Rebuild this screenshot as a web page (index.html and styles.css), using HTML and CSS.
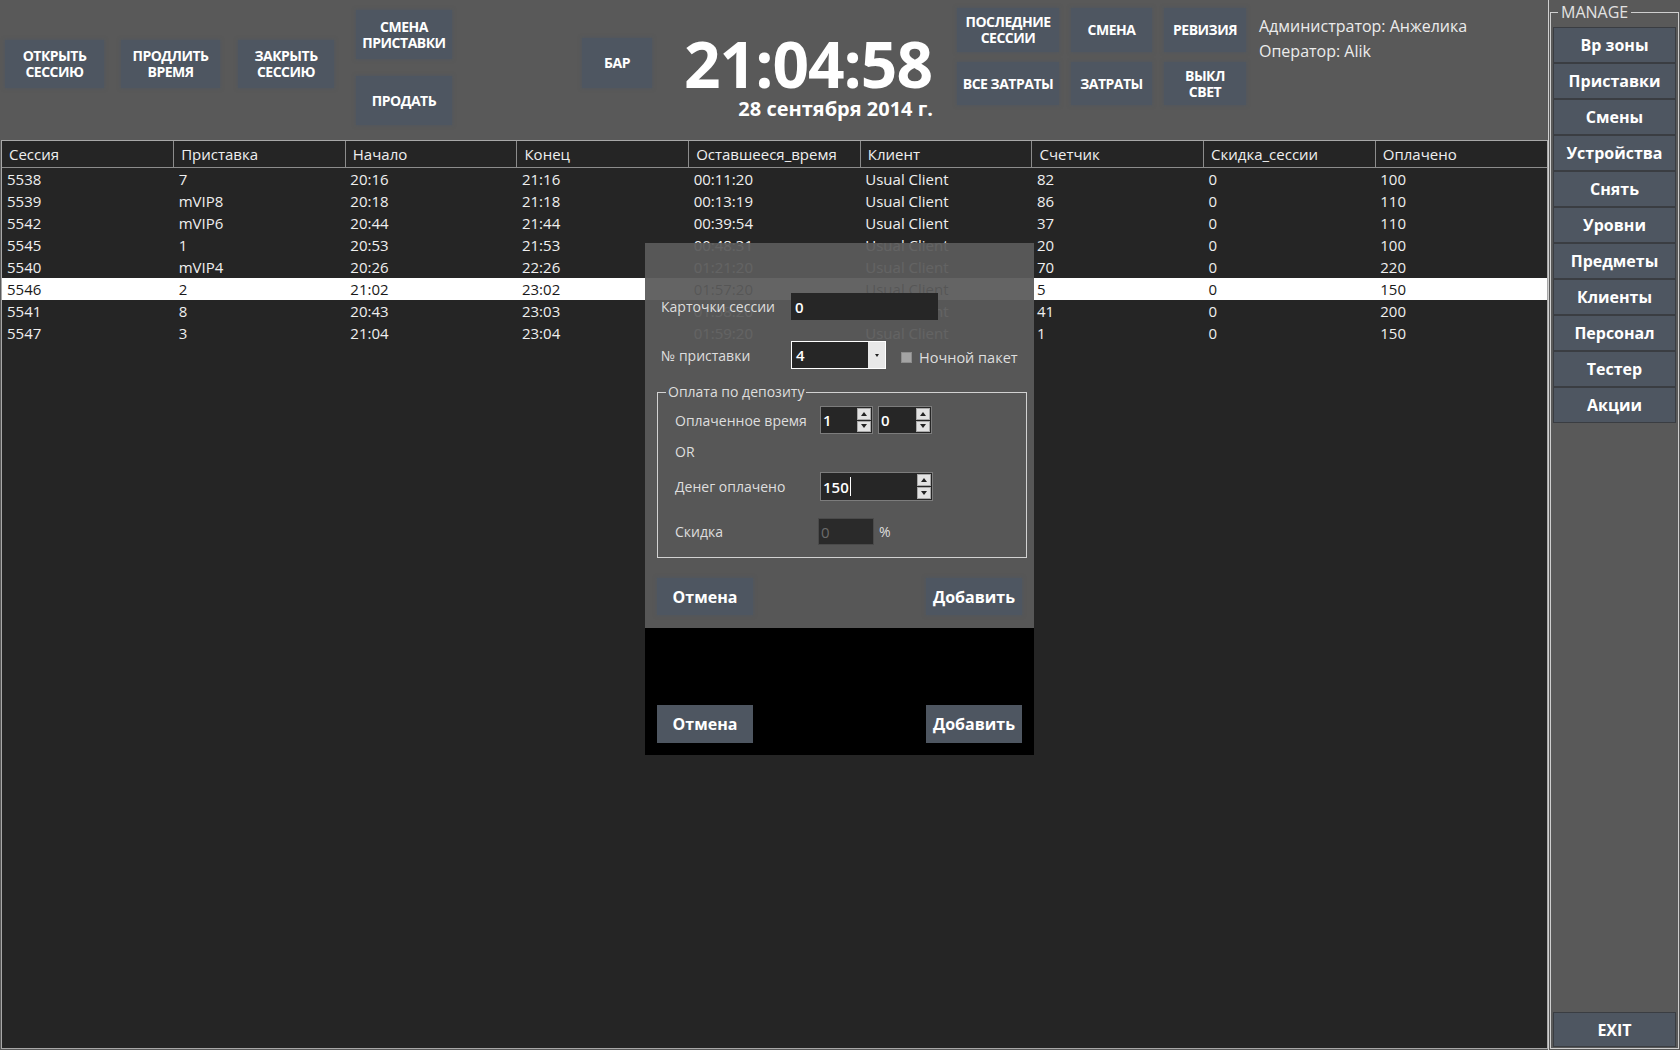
FILE: index.html
```html
<!DOCTYPE html>
<html lang="ru">
<head>
<meta charset="utf-8">
<title>Sessions</title>
<link rel="stylesheet" href="styles.css">
</head>
<body>
<div class="app">
  <div class="main">
    <header class="topbar">
      <div class="tbtn b-open">ОТКРЫТЬ<br>СЕССИЮ</div>
      <div class="tbtn b-ext">ПРОДЛИТЬ<br>ВРЕМЯ</div>
      <div class="tbtn b-close">ЗАКРЫТЬ<br>СЕССИЮ</div>
      <div class="tcol">
        <div class="tbtn b-tall">СМЕНА<br>ПРИСТАВКИ</div>
        <div class="tbtn b-tall b-sell">ПРОДАТЬ</div>
      </div>
      <div class="tbtn b-bar">БАР</div>
      <div class="clock">
        <div class="time">21:04:58</div>
        <div class="date">28 сентября 2014 г.</div>
      </div>
      <div class="rgrid">
        <div class="tbtn">ПОСЛЕДНИЕ<br>СЕССИИ</div>
        <div class="tbtn">СМЕНА</div>
        <div class="tbtn">РЕВИЗИЯ</div>
        <div class="tbtn">ВСЕ ЗАТРАТЫ</div>
        <div class="tbtn">ЗАТРАТЫ</div>
        <div class="tbtn">ВЫКЛ<br>СВЕТ</div>
      </div>
      <div class="admin">
        <div>Администратор: Анжелика</div>
        <div>Оператор: Alik</div>
      </div>
    </header>
    <div class="grid-wrap">
      <table class="grid">
        <thead>
          <tr><th>Сессия</th><th>Приставка</th><th>Начало</th><th>Конец</th><th>Оставшееся_время</th><th>Клиент</th><th>Счетчик</th><th>Скидка_сессии</th><th>Оплачено</th></tr>
        </thead>
        <tbody>
          <tr><td>5538</td><td>7</td><td>20:16</td><td>21:16</td><td>00:11:20</td><td>Usual Client</td><td>82</td><td>0</td><td>100</td></tr>
          <tr><td>5539</td><td>mVIP8</td><td>20:18</td><td>21:18</td><td>00:13:19</td><td>Usual Client</td><td>86</td><td>0</td><td>110</td></tr>
          <tr><td>5542</td><td>mVIP6</td><td>20:44</td><td>21:44</td><td>00:39:54</td><td>Usual Client</td><td>37</td><td>0</td><td>110</td></tr>
          <tr><td>5545</td><td>1</td><td>20:53</td><td>21:53</td><td>00:48:31</td><td>Usual Client</td><td>20</td><td>0</td><td>100</td></tr>
          <tr><td>5540</td><td>mVIP4</td><td>20:26</td><td>22:26</td><td>01:21:20</td><td>Usual Client</td><td>70</td><td>0</td><td>220</td></tr>
          <tr class="sel"><td>5546</td><td>2</td><td>21:02</td><td>23:02</td><td>01:57:20</td><td>Usual Client</td><td>5</td><td>0</td><td>150</td></tr>
          <tr><td>5541</td><td>8</td><td>20:43</td><td>23:03</td><td>01:58:20</td><td>Usual Client</td><td>41</td><td>0</td><td>200</td></tr>
          <tr><td>5547</td><td>3</td><td>21:04</td><td>23:04</td><td>01:59:20</td><td>Usual Client</td><td>1</td><td>0</td><td>150</td></tr>
        </tbody>
      </table>
    </div>
  </div>
  <aside class="sidebar">
    <fieldset class="manage">
      <legend>MANAGE</legend>
      <div class="mlist">
        <div class="mbtn">Вр зоны</div>
        <div class="mbtn">Приставки</div>
        <div class="mbtn">Смены</div>
        <div class="mbtn">Устройства</div>
        <div class="mbtn">Снять</div>
        <div class="mbtn">Уровни</div>
        <div class="mbtn">Предметы</div>
        <div class="mbtn">Клиенты</div>
        <div class="mbtn">Персонал</div>
        <div class="mbtn">Тестер</div>
        <div class="mbtn">Акции</div>
        <div class="mbtn exit">EXIT</div>
      </div>
    </fieldset>
  </aside>

  <div class="dialog">
    <div class="dlg-body">
      <div class="frow r-cards">
        <span class="lbl w130">Карточки сессии</span>
        <div class="inp w147"><span class="val">0</span></div>
      </div>
      <div class="frow r-box">
        <span class="lbl w130">№ приставки</span>
        <div class="combo"><span class="val">4</span><span class="cbtn"></span></div>
        <span class="chk"></span>
        <span class="lbl">Ночной пакет</span>
      </div>
      <fieldset class="group">
        <legend>Оплата по депозиту</legend>
        <div class="frow g-time">
          <span class="lbl w145">Оплаченное время</span>
          <div class="spin w53"><span class="val">1</span><span class="arrows"><i class="up"></i><i class="dn"></i></span></div>
          <div class="spin w54 ml6"><span class="val">0</span><span class="arrows"><i class="up"></i><i class="dn"></i></span></div>
        </div>
        <div class="frow g-or"><span class="lbl">OR</span></div>
        <div class="frow g-money">
          <span class="lbl w145">Денег оплачено</span>
          <div class="spin w113"><span class="val">150<i class="caret"></i></span><span class="arrows"><i class="up"></i><i class="dn"></i></span></div>
        </div>
        <div class="frow g-disc">
          <span class="lbl w143">Скидка</span>
          <div class="inp dis w56"><span class="val">0</span></div>
          <span class="lbl pct">%</span>
        </div>
      </fieldset>
      <div class="dbtns">
        <div class="dbtn soft">Отмена</div>
        <div class="dbtn soft">Добавить</div>
      </div>
    </div>
    <div class="dlg-foot">
      <div class="dbtn">Отмена</div>
      <div class="dbtn">Добавить</div>
    </div>
  </div>
</div>
</body>
</html>
```
FILE: styles.css
```css
* { box-sizing: border-box; }
html, body { margin: 0; padding: 0; }
body {
  width: 1680px;
  height: 1050px;
  overflow: hidden;
  background: #595959;
  font-family: "Open Sans", "Noto Sans", sans-serif;
  color: #eeeeee;
}
.app { position: relative; display: flex; height: 1050px; }
.main { width: 1548px; display: flex; flex-direction: column; background: #595959; }

/* top bar */
.topbar { height: 140px; display: flex; align-items: flex-start; }
.tbtn {
  display: flex; align-items: center; justify-content: center;
  text-align: center;
  background: #4e5661;
  box-shadow: 0 0 3px 1px rgba(78, 86, 97, 0.55);
  color: #ffffff;
  font-weight: 700;
  font-size: 14px;
  line-height: 16px;
  letter-spacing: -0.5px;
}
.b-open { margin: 40px 0 0 5px; width: 99px; height: 48px; }
.b-ext { margin: 40px 0 0 17px; width: 99px; height: 48px; }
.b-close { margin: 40px 0 0 18px; width: 96px; height: 48px; }
.tcol { margin: 10px 0 0 22px; width: 96px; display: flex; flex-direction: column; }
.b-tall { height: 49px; }
.b-sell { margin-top: 17px; }
.b-bar { margin: 38px 0 0 130px; width: 70px; height: 50px; }
.clock { margin: 36px 0 0 30px; width: 252px; display: flex; flex-direction: column; }
.time {
  height: 56px; line-height: 56px;
  font-size: 64px; font-weight: 700; color: #ffffff;
  text-align: center; letter-spacing: -1px; white-space: nowrap;
}
.date {
  margin-top: 6px;
  line-height: 22px; font-size: 20px; font-weight: 700; color: #ffffff;
  text-align: right; padding-right: 1px; white-space: nowrap;
}
.rgrid {
  margin: 8px 0 0 23px;
  display: grid;
  grid-template-columns: 102px 81px 82px;
  grid-template-rows: 44px 43px;
  column-gap: 12px;
  row-gap: 10px;
}
.admin { margin: 14px 0 0 13px; font-size: 16px; line-height: 25px; color: #ececec; white-space: nowrap; }

/* table */
.grid-wrap {
  flex: 1;
  margin: 0 0 1px 1px;
  background: #252525;
  border: 1px solid #a8a8a8;
}
.grid { width: 100%; border-collapse: collapse; table-layout: fixed; font-size: 15px; }
.grid th {
  height: 26px; padding: 0 0 0 7px;
  text-align: left; font-weight: 400; color: #efefef;
  border-right: 1px solid #8c8c8c; border-bottom: 1px solid #8c8c8c;
  white-space: nowrap; overflow: hidden;
}
.grid th:last-child { border-right: none; }
.grid td { height: 22px; padding: 0 0 0 5px; line-height: 22px; color: #efefef; white-space: nowrap; overflow: hidden; }
.grid tr.sel td { background: #ffffff; color: #1a1a1a; }

/* sidebar */
.sidebar {
  width: 132px;
  border-left: 1px solid #d0d0d0;
  background: #595959;
  display: flex; flex-direction: column;
}
.manage {
  flex: 1;
  margin: 2px 1px 1px 1px;
  padding: 5px 2px 1px 2px;
  border: 1px solid #cfcfcf;
  min-width: 0;
  display: flex; flex-direction: column;
}
.manage legend {
  margin-left: 5px; padding: 0 3px;
  font-size: 16px; line-height: 20px; color: #e2e2e2;
}
.mlist { flex: 1; display: flex; flex-direction: column; }
.mbtn {
  height: 36px;
  display: flex; align-items: center; justify-content: center;
  background: #4e5661;
  border: 1px solid #3a3d42;
  color: #ffffff; font-weight: 700; font-size: 16px;
}
.mbtn.exit { margin-top: auto; height: 35px; }

/* dialog */
.dialog { position: absolute; left: 645px; top: 243px; width: 389px; }
.dlg-body {
  height: 385px;
  background: rgba(90, 90, 90, 0.94);
  padding: 50px 12px 0 12px;
  display: flex; flex-direction: column;
}
.frow { display: flex; align-items: center; }
.lbl { font-size: 14px; color: #dedede; white-space: nowrap; }
.w130 { width: 130px; flex: none; }
.w145 { width: 145px; flex: none; }
.w143 { width: 143px; flex: none; }
.r-cards { height: 27px; padding-left: 4px; }
.r-box { height: 28px; margin-top: 21px; padding-left: 4px; }
.inp { height: 27px; background: #262626; display: flex; align-items: center; }
.w147 { width: 147px; }
.w56 { width: 56px; }
.val { padding-left: 4px; font-size: 15px; font-weight: 600; color: #ffffff; display: flex; align-items: center; }
.inp.dis { border: 1px solid #4a4a4a; background: #2a2a2a; }
.inp.dis .val { color: #6a6a6a; font-weight: 400; padding-left: 2px; }
.combo { width: 95px; height: 28px; border: 1px solid #ffffff; background: #262626; display: flex; }
.combo .val { flex: 1; }
.cbtn { width: 17px; background: #e8e8e8; display: flex; align-items: center; justify-content: center; }
.cbtn::before { content: ""; border-left: 2px solid transparent; border-right: 2px solid transparent; border-top: 3px solid #222; }
.chk { width: 11px; height: 11px; margin: 4px 7px 0 15px; background: #a4a4a4; border: 1px solid #8c8c8c; }
.r-box .chk + .lbl { margin-top: 4px; font-size: 14.5px; }

.group {
  margin: 13px 0 0 0;
  width: 370px;
  padding: 4px 0 12px 17px;
  border: 1px solid #d2d2d2;
  min-width: 0;
}
.group legend { margin-left: -9px; padding: 0 2px; font-size: 14px; line-height: 20px; color: #dedede; }
.g-time { height: 28px; }
.g-or { height: 20px; margin-top: 7px; }
.g-money { height: 29px; margin-top: 11px; }
.g-disc { height: 27px; margin-top: 17px; }
.pct { margin-left: 5px; }
.spin { height: 100%; background: #262626; border: 1px solid #7c7c7c; display: flex; }
.spin .val { flex: 1; padding-left: 2px; }
.w53 { width: 53px; }
.w54 { width: 54px; }
.w113 { width: 113px; }
.ml6 { margin-left: 5px; }
.arrows { width: 15px; padding: 1px 1px 1px 0; display: flex; flex-direction: column; gap: 1px; }
.arrows i {
  flex: 1; background: #e2e2e2; border: 1px solid #a9a9a9;
  display: flex; align-items: center; justify-content: center;
}
.arrows i.up::before { content: ""; border-left: 3px solid transparent; border-right: 3px solid transparent; border-bottom: 4px solid #222; }
.arrows i.dn::before { content: ""; border-left: 3px solid transparent; border-right: 3px solid transparent; border-top: 4px solid #222; }
.caret { display: inline-block; width: 1px; height: 19px; background: #ffffff; margin-left: 1px; }

.dbtns { margin-top: 20px; display: flex; justify-content: space-between; }
.dbtn {
  width: 96px; height: 37px;
  display: flex; align-items: center; justify-content: center;
  background: #4e5661; color: #ffffff; font-weight: 700; font-size: 16px;
}
.dbtn.soft { box-shadow: 0 0 3px 1px rgba(78, 86, 97, 0.6); }
.dlg-foot {
  height: 127px; background: #000000;
  padding: 77px 12px 0 12px;
  display: flex; justify-content: space-between; align-items: flex-start;
}
.dlg-foot .dbtn { height: 38px; }
```
